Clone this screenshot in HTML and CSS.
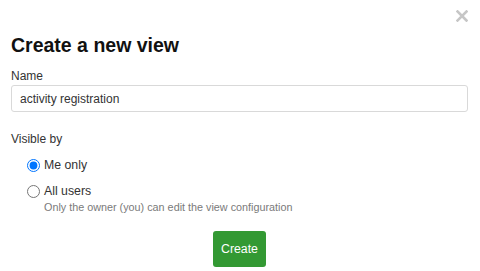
FILE: index.html
```html
<!DOCTYPE html>
<html lang="en">
<head>
    <meta charset="UTF-8">
    <meta name="viewport" content="width=device-width, initial-scale=1.0">
    <title>Create a new view</title>
    <link rel="stylesheet" href="styles.css">
</head>
<body>
    <div class="modal">
        <!-- Close button -->
        <button class="close" aria-label="Close">
            <svg width="12" height="12" viewBox="0 0 12 12">
                <path d="M1.5 1.5 L10.5 10.5 M10.5 1.5 L1.5 10.5" stroke="#c6c6c6" stroke-width="2.6" stroke-linecap="square"/>
            </svg>
        </button>

        <h2 class="modal-title">Create a new view</h2>

        <form class="view-form">
            <label class="field-label" for="view-name">Name</label>
            <input type="text" id="view-name" class="text-input" value="activity registration">

            <div class="field-label visible-label">Visible by</div>
            <div class="radio-group">
                <label class="radio-row">
                    <input type="radio" name="visibility" checked>
                    <span>Me only</span>
                </label>
                <label class="radio-row">
                    <input type="radio" name="visibility">
                    <span>All users</span>
                </label>
                <p class="help-text">Only the owner (you) can edit the view configuration</p>
            </div>

            <div class="actions">
                <button type="button" class="btn-create">Create</button>
            </div>
        </form>
    </div>
</body>
</html>
```
FILE: styles.css
```css
/* Modal base */
body {
    font-family: "Liberation Sans", Arial, sans-serif;
    margin: 0;
    padding: 0;
    background-color: #fff;
    color: #222;
}

.modal {
    position: relative;
    padding: 33px 12px 0 11px;
}

.close {
    position: absolute;
    top: 10px;
    right: 12px;
    background: none;
    border: none;
    padding: 0;
    width: 12px;
    height: 12px;
    cursor: pointer;
}

.close svg {
    display: block;
}

.modal-title {
    font-size: 19.5px;
    line-height: 24px;
    font-weight: bold;
    margin: 0 0 11px;
    color: #111;
}

.field-label {
    display: block;
    font-size: 12px;
    line-height: 16px;
    color: #333;
}

.text-input {
    display: block;
    box-sizing: border-box;
    width: 100%;
    height: 27px;
    margin-top: 1px;
    padding: 0 8px;
    border: 1px solid #d9d9d9;
    border-radius: 3px;
    font-family: inherit;
    font-size: 12px;
    color: #333;
}

.visible-label {
    margin-top: 19px;
}

.radio-group {
    padding-left: 16px;
    margin-top: 10px;
}

.radio-row {
    display: flex;
    align-items: center;
    gap: 4px;
    font-size: 12.3px;
    line-height: 16px;
    color: #333;
    margin-bottom: 10px;
}

.radio-row input {
    width: 13px;
    height: 13px;
    margin: 0;
}

.help-text {
    margin: -9px 0 0 17px;
    font-size: 10.8px;
    line-height: 14px;
    color: #7a7a7a;
}

.actions {
    display: flex;
    justify-content: center;
    margin-top: 17px;
}

.btn-create {
    background-color: #339933;
    color: #fff;
    border: none;
    border-radius: 3px;
    height: 36px;
    padding: 0 8px;
    font-family: inherit;
    font-size: 12.3px;
    cursor: pointer;
}
```
